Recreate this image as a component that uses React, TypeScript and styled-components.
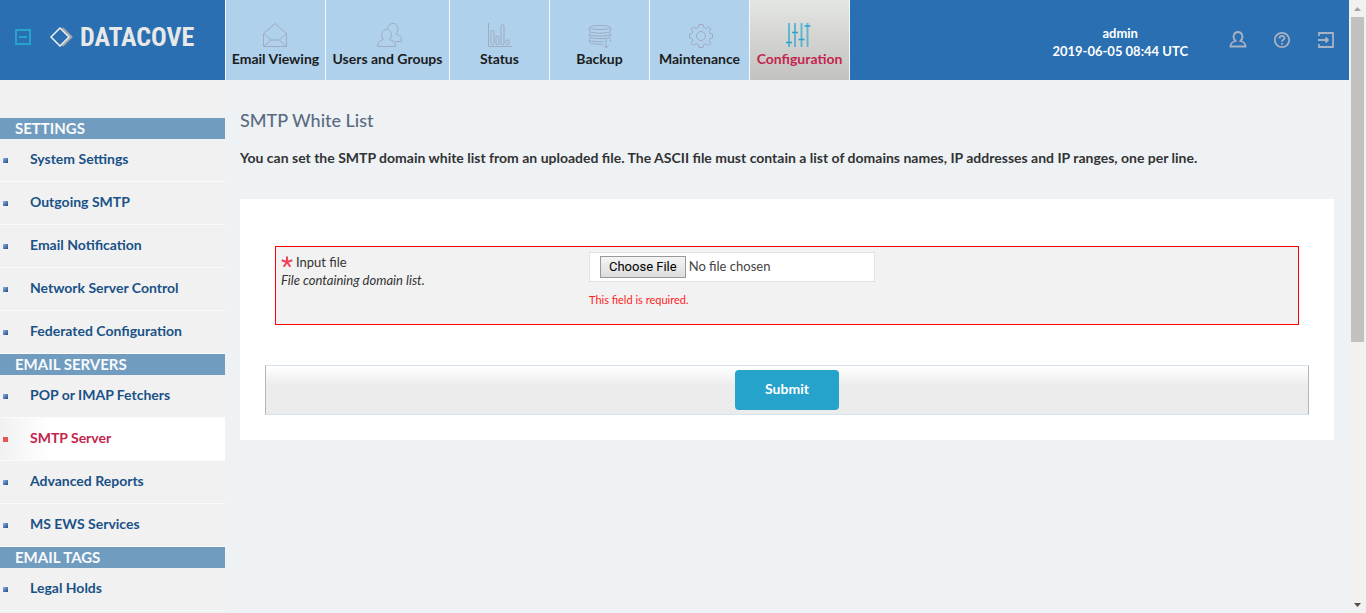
import React from 'react';
import styled, { createGlobalStyle, css } from 'styled-components';

const GlobalStyle = createGlobalStyle`
  *, *::before, *::after { box-sizing: border-box; }
  body {
    margin: 0;
    background: #eef2f5;
    color: #333;
    font-family: Lato, "Liberation Sans", sans-serif;
    font-size: 14px;
    line-height: 18px;
  }
  h1, h2, p, ul { margin: 0; padding: 0; }
  ul { list-style: none; }
  a { color: inherit; text-decoration: none; }
`;

const Frame = styled.div`
  display: flex;
  height: 100vh;
  overflow: hidden;
`;

const Page = styled.div`
  flex: 1;
  min-width: 0;
  display: flex;
  flex-direction: column;
`;

const Header = styled.header`
  flex: none;
  display: flex;
  height: 80px;
  background: #296fb1;
  color: #fff;
`;

const Brand = styled.div`
  flex: none;
  display: flex;
  align-items: center;
  width: 225px;
  padding: 0 0 6px 15px;
`;

const Collapse = styled.button`
  display: flex;
  padding: 0;
  border: 0;
  background: none;
  cursor: pointer;
`;

const Logo = styled.a`
  display: flex;
  align-items: center;
  gap: 6px;
  margin-left: 19px;
  color: #e8e8e8;
  font: bold 26px/28px "Roboto Condensed", "Open Sans Condensed", "Noto Sans Condensed", "Noto Sans ExtraCondensed", "DejaVu Sans Condensed", sans-serif;
`;

const Nav = styled.nav`
  display: flex;
  border-left: 1px solid #f4f8fc;
`;

const NavLink = styled.a<{ $active?: boolean; $wide?: boolean }>`
  display: flex;
  flex-direction: column;
  align-items: center;
  width: ${p => (p.$wide ? 124 : 100)}px;
  padding-top: 22px;
  border-right: 1px solid #f4f8fc;
  background: #afd1ec;
  color: #1c1c1c;
  font-weight: 700;
  white-space: nowrap;
  svg { color: #9fabc2; margin-bottom: 2px; }
  ${p => p.$active && css`
    background: linear-gradient(#e4e6e3, #c2c2c0);
    color: #c4254c;
    svg { color: #27a3cd; }
  `}
`;

const Account = styled.div`
  flex: 1;
  display: flex;
  justify-content: flex-end;
  align-items: center;
  padding-right: 14px;
`;

const UserInfo = styled.div`
  margin-right: 41px;
  padding-top: 4px;
  text-align: center;
  font-size: 13px;
  font-weight: 700;
`;

const Tools = styled.div`
  display: flex;
  gap: 26px;
`;

const ToolLink = styled.a`
  display: flex;
  color: #a9b1c2;
`;

const Body = styled.div`
  flex: 1;
  min-height: 0;
  display: flex;
`;

const Sidebar = styled.nav`
  flex: none;
  width: 225px;
  padding-top: 38px;
  background: #f1f1f1;
  overflow: hidden;
`;

const GroupTitle = styled.h2`
  height: 21px;
  padding-left: 15px;
  background: #709cbf;
  color: #f8fafc;
  font-size: 15px;
  line-height: 20px;
  font-weight: 700;
  text-transform: uppercase;
`;

const SideLink = styled.a<{ $active?: boolean }>`
  display: flex;
  align-items: center;
  gap: 22px;
  height: 43px;
  padding-left: 3px;
  padding-bottom: 3px;
  border-bottom: 1px solid #fbfbfb;
  color: ${p => (p.$active ? '#c4254c' : '#1a5288')};
  background: ${p => (p.$active ? 'linear-gradient(90deg, #f1f1f1, #fff 50px)' : 'none')};
  font-weight: 700;
  &::before {
    content: "";
    width: 5px;
    height: 5px;
    margin-top: 3px;
    background: ${p => (p.$active ? '#e55353' : 'linear-gradient(135deg, #8fb4dc, #1d4a86)')};
  }
`;

const Main = styled.main`
  flex: 1;
  min-width: 0;
  padding: 28px 15px 0;
`;

const Title = styled.h1`
  color: #5b6b7f;
  font-size: 18px;
  line-height: 24px;
  font-weight: 500;
`;

const Intro = styled.p`
  margin-top: 17px;
  font-weight: 700;
`;

const Card = styled.form`
  margin-top: 32px;
  padding: 47px 25px 25px;
  background: #fff;
`;

const Field = styled.div`
  display: flex;
  height: 79px;
  margin: 0 10px;
  padding: 5px;
  border: 1px solid #f00;
  background: #f2f2f2;
`;

const FieldLabel = styled.div`
  width: 308px;
  font-size: 13px;
  padding-top: 1px;
  label { display: flex; align-items: center; gap: 3px; }
`;

const Hint = styled.p`
  font-size: 13px;
  font-style: italic;
`;

const FileInput = styled.input`
  display: block;
  width: 286px;
  height: 30px;
  padding: 3px 10px;
  border: 1px solid #e1e1ea;
  background: #fff;
  color: #444;
  font: 13px/20px Lato, sans-serif;
  &::file-selector-button {
    height: 22px;
    margin: 0 3px 0 0;
    padding: 0 8px;
    border: 1px solid #999;
    border-radius: 0;
    background: linear-gradient(#f5f5f5, #dcdcdc);
    color: #000;
    font: 13px/18px Roboto, sans-serif;
  }
`;

const ErrorText = styled.p`
  margin-top: 9px;
  color: #f22;
  font-size: 11px;
`;

const Actions = styled.div`
  display: flex;
  align-items: center;
  justify-content: center;
  height: 50px;
  margin-top: 40px;
  border: 1px solid #d6e2f0;
  border-left-color: #b5b5b5;
  border-right-color: #b5b5b5;
  background:
    linear-gradient(#fff, rgba(255, 255, 255, 0) 20px),
    linear-gradient(135deg, #eee 25%, #e9e9e9 25% 50%, #eee 50% 75%, #e9e9e9 75%) 0 0 / 4px 4px;
`;

const Submit = styled.button`
  width: 104px;
  height: 40px;
  padding: 0 0 2px;
  border: 0;
  border-radius: 4px;
  background: #26a3cb;
  color: #fff;
  font: 700 14px/18px Lato, sans-serif;
`;

const ScrollTrack = styled.div`
  flex: none;
  display: flex;
  flex-direction: column;
  align-items: center;
  width: 17px;
  background: #f1f1f1;
`;

const ScrollThumb = styled.div`
  width: 13px;
  height: 53%;
  margin-bottom: auto;
  background: #c1c1c1;
`;

const line = { fill: 'none', stroke: 'currentColor', strokeWidth: 1 };

const MailIcon = () => (
  <svg width="26" height="26" viewBox="1 0 26 26" {...line}>
    <path d="M1.500 11.500 13 1.500 24.500 11.500V24.500H1.500ZM1.500 11.500 9 18H17L24.500 11.500M9 18 1.500 24.500M17 18 24.500 24.500" />
  </svg>
);
const UsersIcon = () => (
  <svg width="26" height="26" viewBox="-2 0 26 26" overflow="visible" {...line}>
    <path d="M.5 24.500C.5 20 3 18.500 6.500 17.500 3.500 14 4 7.500 9.500 7.500S15.500 14 12.500 17.500C16 18.500 18.500 20 18.500 24.500Z" />
    <path d="M10.500 6.500C11.500 3 13 1.500 16 1.500 21.500 1.500 22.500 8 19 12 22.500 13 24.500 15 24.500 19.500H18" />
  </svg>
);
const ChartIcon = () => (
  <svg width="26" height="26" viewBox="0 0 26 26" {...line}>
    <path d="M1.500 1V24.500H25" />
    <rect x="4" y="8.500" width="3" height="14" rx="1" /><rect x="9" y="14" width="3" height="8.500" rx="1" />
    <rect x="14" y="3" width="3" height="19.500" rx="1" /><rect x="19" y="18" width="3" height="4.500" rx="1" />
  </svg>
);
const DatabaseIcon = () => (
  <svg width="26" height="26" viewBox="0 0 26 26" {...line}>
    <ellipse cx="13" cy="5.500" rx="10.500" ry="2" />
    <path d="M2.500 5.500V9C2.500 11.800 23.500 11.800 23.500 9V5.500M4 10C1.500 12 2.500 12.500 2.500 14.500 2.500 17.300 23.500 17.300 23.500 14.500 23.500 12.500 24.500 12 22 10M2.500 12.500C4 14.500 22 14.500 23.500 12.500M4 15.500C1.500 17.500 2.500 18 2.500 20 2.500 21.800 9 22.500 16 22M22 15.500C23.500 16.500 23.500 18 23.500 20M2.500 18C4 19.500 11 20 16.500 19.500" />
    <path d="M19 17V26M16.500 23.500 19 26 21.500 23.500" />
  </svg>
);
const GearIcon = () => (
  <svg width="26" height="26" viewBox="-1 0 26 26" overflow="visible" {...line}>
    <circle cx="13" cy="14" r="4.500" />
    <path d="M11 2.500H15L15.700 5.500 18 6.500 20.600 4.700 23 7 21 9.500 22 11.500 24.500 12V16L22 16.500 21 18.500 23 21.300 20.600 23.500 18 21.700 15.700 22.500 15 25.500H11L10.300 22.500 8 21.700 5.400 23.500 3 21.300 5 18.500 4 16.500 1.500 16V12L4 11.500 5 9.500 3 7 5.400 4.700 8 6.500 10.300 5.500Z" strokeLinejoin="round" />
  </svg>
);
const SlidersIcon = () => (
  <svg width="26" height="26" viewBox="1 0 26 26" overflow="visible" {...line}>
    <path d="M3 1V25M9 1V25M15.500 1V25M21.500 1V25" strokeWidth="2" opacity=".65" />
    <path d="M0 20.500H6M6 10.500H12M12.500 17.500H18.500M18.500 4H24.500" strokeWidth="1.500" />
  </svg>
);

const navItems = [
  { label: 'Email Viewing', icon: <MailIcon /> },
  { label: 'Users and Groups', icon: <UsersIcon />, wide: true },
  { label: 'Status', icon: <ChartIcon /> },
  { label: 'Backup', icon: <DatabaseIcon /> },
  { label: 'Maintenance', icon: <GearIcon /> },
  { label: 'Configuration', icon: <SlidersIcon />, active: true },
];

const groups = [
  { title: 'Settings', items: ['System Settings', 'Outgoing SMTP', 'Email Notification', 'Network Server Control', 'Federated Configuration'] },
  { title: 'Email Servers', items: ['POP or IMAP Fetchers', 'SMTP Server', 'Advanced Reports', 'MS EWS Services'] },
  { title: 'Email Tags', items: ['Legal Holds'] },
];

export default function App() {
  return (
    <>
      <GlobalStyle />
      <Frame>
        <Page>
          <Header>
            <Brand>
              <Collapse type="button" aria-label="Collapse menu">
                <svg width="16" height="16" viewBox="0 0 16 16" fill="none" stroke="#27a3cd" strokeWidth="2">
                  <path d="M1 1H15V15H1ZM4 8H12" />
                </svg>
              </Collapse>
              <Logo href="#">
                <svg width="24" height="20" viewBox="0 0 24 20" fill="none" strokeWidth="1.500">
                  <path d="M12.500 1 21.500 10 12.500 19" stroke="#a9a6a6" strokeWidth="2" />
                  <path d="M10 1 19 10 10 19 1 10Z" stroke="#f2f2f2" />
                </svg>
                DATACOVE
              </Logo>
            </Brand>
            <Nav aria-label="Main">
              {navItems.map(n => (
                <NavLink key={n.label} href="#" $active={n.active} $wide={n.wide}>
                  {n.icon}
                  {n.label}
                </NavLink>
              ))}
            </Nav>
            <Account>
              <UserInfo>
                <div>admin</div>
                <div>2019-06-05 08:44 UTC</div>
              </UserInfo>
              <Tools>
                <ToolLink href="#" aria-label="Profile">
                  <svg width="18" height="18" viewBox="0 0 18 18" fill="none" stroke="currentColor" strokeWidth="1.800">
                    <path d="M1.500 15.500C1.500 12 3 11 6.500 10 3 6.500 4.500 1 9 1S15 6.500 11.500 10C15 11 16.500 12 16.500 15.500Z" />
                  </svg>
                </ToolLink>
                <ToolLink href="#" aria-label="Help">
                  <svg width="18" height="18" viewBox="0 0 18 18" fill="none" stroke="currentColor" strokeWidth="1.800">
                    <circle cx="9" cy="9" r="7.200" />
                    <path d="M6.500 7.500C6.500 4 11.500 4.300 11.500 7 11.500 8.800 9 8.500 9 10.800M9 12V13.800" />
                  </svg>
                </ToolLink>
                <ToolLink href="#" aria-label="Log out">
                  <svg width="18" height="18" viewBox="0 0 18 18" fill="none" stroke="currentColor" strokeWidth="1.800">
                    <path d="M2 5V2H16V16H2V13M1 9H11M8.500 6.500 11 9 8.500 11.500" />
                  </svg>
                </ToolLink>
              </Tools>
            </Account>
          </Header>
          <Body>
            <Sidebar aria-label="Configuration">
              {groups.map(g => (
                <section key={g.title}>
                  <GroupTitle>{g.title}</GroupTitle>
                  <ul>
                    {g.items.map(i => (
                      <li key={i}><SideLink href="#" $active={i === 'SMTP Server'}>{i}</SideLink></li>
                    ))}
                  </ul>
                </section>
              ))}
            </Sidebar>
            <Main>
              <Title>SMTP White List</Title>
              <Intro>
                You can set the SMTP domain white list from an uploaded file. The ASCII file must contain a list of
                domains names, IP addresses and IP ranges, one per line.
              </Intro>
              <Card onSubmit={e => e.preventDefault()}>
                <Field>
                  <FieldLabel>
                    <label htmlFor="domain-file">
                      <svg width="12" height="12" viewBox="0 0 12 12" stroke="#f0405a" strokeWidth="2">
                        <path d="M6 6V0.500M6 6 0.700 4.300M6 6 11.300 4.300M6 6 2.700 10.800M6 6 9.300 10.800" />
                      </svg>
                      Input file
                    </label>
                    <Hint id="file-hint">File containing domain list.</Hint>
                  </FieldLabel>
                  <div>
                    <FileInput id="domain-file" type="file" aria-describedby="file-hint file-error" />
                    <ErrorText id="file-error">This field is required.</ErrorText>
                  </div>
                </Field>
                <Actions>
                  <Submit type="submit">Submit</Submit>
                </Actions>
              </Card>
            </Main>
          </Body>
        </Page>
        <ScrollTrack aria-hidden="true">
          <svg width="17" height="17" viewBox="0 0 17 17" fill="#a3a3a3"><path d="M5 11 8.500 7 12 11Z" /></svg>
          <ScrollThumb />
          <svg width="17" height="17" viewBox="0 0 17 17" fill="#505050"><path d="M5 7 8.500 11 12 7Z" /></svg>
        </ScrollTrack>
      </Frame>
    </>
  );
}
